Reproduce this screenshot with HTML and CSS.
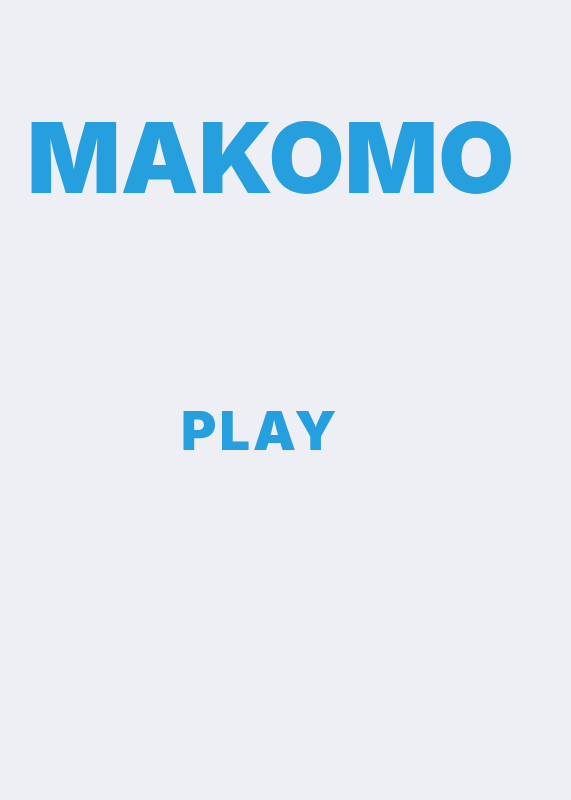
FILE: index.html
```html
<!DOCTYPE html>
<html>
<head>
<meta charset="utf-8">
<link rel="stylesheet" href="styles.css">
</head>
<body>
<main class="screen">
  <h1 class="title">MAKOMO</h1>
  <button class="play">PLAY</button>
</main>
</body>
</html>
```
FILE: styles.css
```css
html, body {
  margin: 0;
  padding: 0;
  background: #eeeff4;
}
.screen {
  width: 571px;
  height: 800px;
  display: flex;
  flex-direction: column;
  align-items: flex-start;
  font-family: Inter, "Liberation Sans", sans-serif;
  color: #259fdd;
}
.title {
  margin: 109px 0 0 27px;
  font-size: 98px;
  font-weight: 900;
  line-height: 98px;
  letter-spacing: 0;
}
.play {
  margin: 197px 0 0 181px;
  padding: 0;
  border: none;
  background: transparent;
  color: #259fdd;
  font-family: Inter, "Liberation Sans", sans-serif;
  font-size: 54px;
  font-weight: 900;
  line-height: 54px;
  letter-spacing: 3px;
}
```
